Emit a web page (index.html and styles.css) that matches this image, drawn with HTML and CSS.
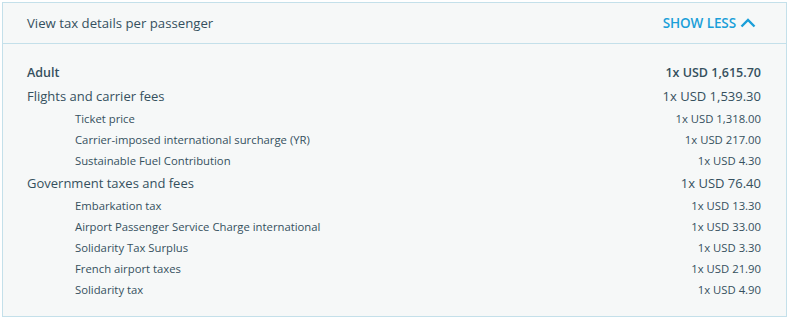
FILE: index.html
```html
<!DOCTYPE html>
<html>
<head>
<meta charset="utf-8">
<link rel="stylesheet" href="styles.css">
</head>
<body>
<section class="panel">
  <header class="panel-head">
    <span class="title">View tax details per passenger</span>
    <button class="toggle">SHOW LESS
      <svg class="chev" width="16" height="10" viewBox="0 0 16 10"><path d="M1.5 8.5 L8 2 L14.5 8.5" fill="none" stroke="currentColor" stroke-width="2.4"/></svg>
    </button>
  </header>
  <div class="panel-body">
    <div class="row pax"><span>Adult</span><span>1x USD 1,615.70</span></div>
    <div class="row main"><span>Flights and carrier fees</span><span>1x USD 1,539.30</span></div>
    <div class="row sub"><span>Ticket price</span><span>1x USD 1,318.00</span></div>
    <div class="row sub"><span>Carrier-imposed international surcharge (YR)</span><span>1x USD 217.00</span></div>
    <div class="row sub"><span>Sustainable Fuel Contribution</span><span>1x USD 4.30</span></div>
    <div class="row main"><span>Government taxes and fees</span><span>1x USD 76.40</span></div>
    <div class="row sub"><span>Embarkation tax</span><span>1x USD 13.30</span></div>
    <div class="row sub"><span>Airport Passenger Service Charge international</span><span>1x USD 33.00</span></div>
    <div class="row sub"><span>Solidarity Tax Surplus</span><span>1x USD 3.30</span></div>
    <div class="row sub"><span>French airport taxes</span><span>1x USD 21.90</span></div>
    <div class="row sub"><span>Solidarity tax</span><span>1x USD 4.90</span></div>
  </div>
</section>
</body>
</html>
```
FILE: styles.css
```css
html, body { margin: 0; padding: 0; background: #ffffff; }
body { padding: 2px; font-family: "Open Sans", "Noto Sans", sans-serif; color: #35505e; }
.panel {
  width: 785px;
  box-sizing: border-box;
  border: 1px solid #c4e0ea;
  background: #f6f8f8;
}
.panel-head {
  height: 41px;
  box-sizing: border-box;
  border-bottom: 1px solid #c4e0ea;
  display: flex;
  align-items: center;
  justify-content: space-between;
  padding: 0 30px 0 24px;
}
.title { font-size: 13.2px; }
.toggle {
  border: 0; background: none; padding: 0; margin: 0;
  font-family: inherit; font-size: 13.5px; font-weight: 600;
  color: #1a9fd9;
  display: flex; align-items: center; gap: 4px;
  letter-spacing: -0.1px;
}
.chev { display: block; margin-top: -1px; }
.panel-body { padding: 16px 25px 16px 24px; }
.row { display: flex; justify-content: space-between; align-items: center; }
.pax { height: 24px; font-size: 12.5px; font-weight: 600; }
.main { height: 24px; font-size: 13px; }
.sub { height: 21px; font-size: 11.3px; padding-left: 48px; }
```
